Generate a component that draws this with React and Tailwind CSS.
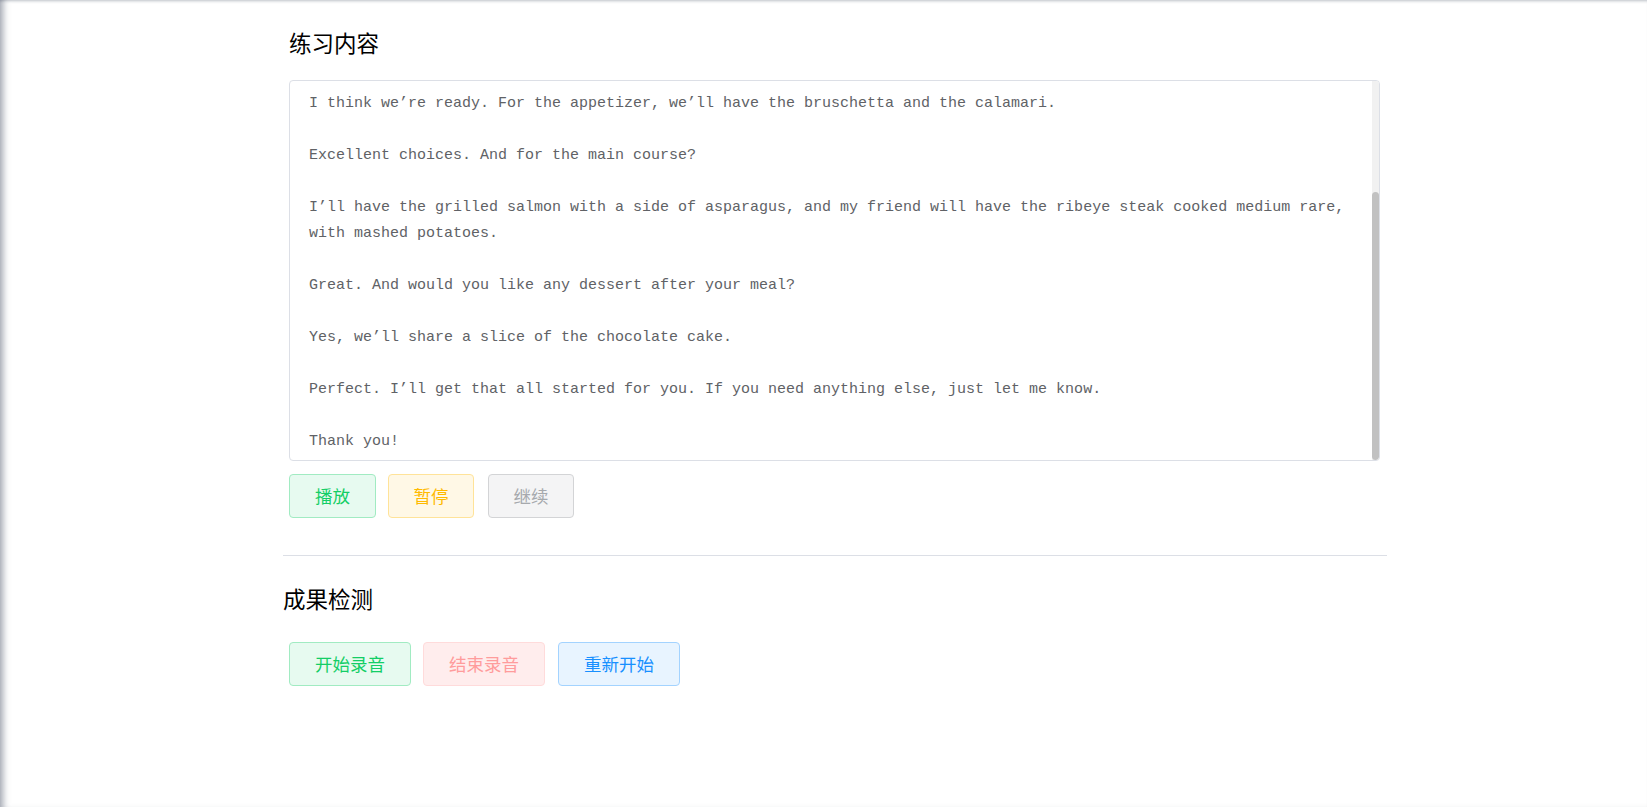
import React from 'react';

const practiceText = `I think we’re ready. For the appetizer, we’ll have the bruschetta and the calamari.

Excellent choices. And for the main course?

I’ll have the grilled salmon with a side of asparagus, and my friend will have the ribeye steak cooked medium rare, with mashed potatoes.

Great. And would you like any dessert after your meal?

Yes, we’ll share a slice of the chocolate cake.

Perfect. I’ll get that all started for you. If you need anything else, just let me know.

Thank you!`;

const cjk = { fontFamily: '"Noto Sans CJK SC", "Noto Sans", sans-serif' };

const Btn = ({ children, className }) => (
  <button
    style={cjk}
    className={`h-[44px] rounded-[4px] border text-[17.5px] leading-none ${className}`}
  >
    {children}
  </button>
);

const App = () => {
  return (
    <div className="min-h-[807px] w-full bg-white shadow-[inset_8px_0_7px_-5px_rgba(80,90,110,0.55),inset_0_3px_3px_-2px_rgba(80,90,110,0.35)]">
      <div className="ml-[283px] w-[1104px] pt-[27px] pb-10">
        {/* 练习内容 */}
        <div className="ml-[6px] w-[1091px]">
          <h2 style={cjk} className="text-[22.5px] leading-[30px] font-normal text-black">练习内容</h2>
          <div className="relative mt-[23px] h-[381px] overflow-hidden rounded-[4px] border border-[#dcdfe6]">
            <div className="flex h-full flex-col-reverse overflow-y-scroll">
              <div
                style={{ fontFamily: '"Liberation Mono", "Noto Sans CJK SC", monospace' }}
                className="whitespace-pre-wrap pt-[167px] pb-[5px] pl-[19px] pr-[26px] text-[15px] leading-[26px] text-[#606266]"
              >
                {practiceText}
              </div>
            </div>
            {/* scrollbar */}
            <div className="absolute top-0 right-0 bottom-0 w-[7px] bg-[#f1f1f1]">
              <div className="absolute right-0 bottom-0 h-[268px] w-[7px] rounded-[4px] bg-[#c1c1c1]" />
            </div>
          </div>
          <div className="mt-[13px] flex gap-[12px]">
            <Btn className="w-[87px] border-[#a1ebc2] bg-[#e7faf0] text-[#13ce66]">播放</Btn>
            <Btn className="w-[86px] border-[#ffe399] bg-[#fff8e6] text-[#ffba00]">暂停</Btn>
            <Btn className="ml-[2px] w-[86px] border-[#d3d4d6] bg-[#f4f4f5] text-[#a6a9ad]">继续</Btn>
          </div>
        </div>

        <div className="mt-[37px] h-px w-full bg-[#dcdfe6]" />

        {/* 成果检测 */}
        <h2 style={cjk} className="mt-[27px] text-[22.5px] leading-[30px] font-normal text-black">成果检测</h2>
        <div className="mt-[29px] ml-[6px] flex gap-[12px]">
          <Btn className="w-[122px] border-[#a1ebc2] bg-[#e7faf0] text-[#13ce66]">开始录音</Btn>
          <Btn className="w-[122px] border-[#ffdbdb] bg-[#ffeded] text-[#ff9c9c]">结束录音</Btn>
          <Btn className="ml-[1px] w-[122px] border-[#a3d3ff] bg-[#e8f4ff] text-[#1890ff]">重新开始</Btn>
        </div>
      </div>
    </div>
  );
};

export default App;
